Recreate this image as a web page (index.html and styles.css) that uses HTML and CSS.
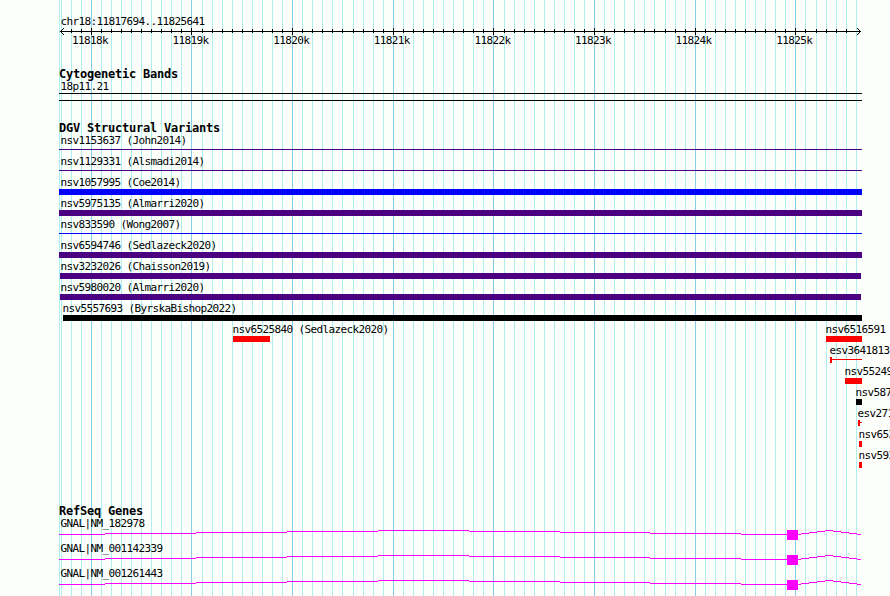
FILE: index.html
```
<!DOCTYPE html>
<html lang="en">
<head>
<meta charset="utf-8">
<title>chr18:11817694..11825641</title>
<link rel="stylesheet" href="styles.css">
</head>
<body>
<main class="browser">
  <svg class="grid" id="grid" width="890" height="596" shape-rendering="crispEdges" aria-hidden="true"></svg>

  <section class="ruler">
    <p class="label">chr18:11817694..11825641</p>
    <svg class="axis" id="axis" width="802" height="7" shape-rendering="crispEdges"></svg>
    <div class="scale">
      <span>11818k</span><span>11819k</span><span>11820k</span><span>11821k</span><span>11822k</span><span>11823k</span><span>11824k</span><span>11825k</span>
    </div>
  </section>

  <section class="bands">
    <h2>Cytogenetic Bands</h2>
    <p class="label">18p11.21</p>
    <div class="band"></div>
  </section>

  <section class="variants">
    <h2>DGV Structural Variants</h2>
    <div id="variants"></div>
  </section>

  <section class="genes">
    <h2>RefSeq Genes</h2>
    <div id="genes"></div>
  </section>
</main>
<script src="tracks.js"></script>
</body>
</html>
```
FILE: styles.css
```
* { box-sizing: border-box; }
body { margin: 0; background: #fdfffc; }
.browser {
  position: relative;
  width: 890px;
  height: 596px;
  padding: 15px 0 0 59px;
  overflow: hidden;
  display: flex;
  flex-direction: column;
  color: #000;
  font-family: "DejaVu Sans Mono", monospace;
}
.grid { position: absolute; left: 0; top: 0; z-index: -1; }
.label, .scale, h2 { margin: 0; white-space: nowrap; }
.label, .scale { font-size: 11px; line-height: 13px; letter-spacing: -0.622px; }
.label { padding-left: 1.4px; height: 13px; }
h2 { font-size: 12px; line-height: 13px; height: 12px; font-weight: bold; letter-spacing: -0.224px; }
svg { display: block; flex: none; }
section { flex: none; }

.ruler { height: 53px; }
.scale { display: flex; padding-left: 13px; margin-top: -1px; }
.scale span { width: 100.6px; flex: none; }

.bands { height: 54px; }
.band { width: 803px; height: 8px; border: solid #000; border-width: 1px 0; }

.variants { height: 383px; }
.variant { height: 21px; }
.bar { height: 6px; background: currentColor; }
.bar.thin { height: 1px; margin-top: 2px; }
.bar.flag { background: linear-gradient(currentColor, currentColor) 0 2px / 100% 1px no-repeat, linear-gradient(currentColor, currentColor) 0 0 / 2px 6px no-repeat; }
.variant .label { color: #000; }
.blue { color: #0000ff; }
.indigo { color: #4b0082; }
.black { color: #000; }
.red { color: #ff0000; }

.gene { height: 25px; }
.transcript { margin-top: -7px; }
```
FILE: tracks.js
```
const SVG = "http://www.w3.org/2000/svg";
const LEFT = 59;
const ORIGIN = 91.297;
const STEP = 10.066;

function rect(svg, x, y, width, height, fill) {
  const r = document.createElementNS(SVG, "rect");
  Object.entries({ x, y, width, height, fill }).forEach(([k, v]) => r.setAttribute(k, v));
  svg.appendChild(r);
}

// Guide lines every 100 bases, darker every 1000, with ticks on the ruler
const grid = document.getElementById("grid");
const axis = document.getElementById("axis");
rect(grid, LEFT, 0, 1, 596, "#afeeee");
rect(axis, 1, 3, 801, 1, "#000");
for (let n = -3; n <= 76; n++) {
  const x = Math.floor(ORIGIN + STEP * n);
  const major = n % 10 === 0;
  rect(grid, x, 0, 1, 596, major ? "#87ceeb" : "#afeeee");
  if (n > -3 && n < 76) {
    rect(axis, x - LEFT, major ? 0 : 1, 1, major ? 7 : 4, "#000");
  }
}
[1, 2, 3].forEach(d => {
  [3 - d, 3 + d].forEach(y => {
    rect(axis, 1 + d, y, 1, 1, "#000");
    rect(axis, 801 - d, y, 1, 1, "#000");
  });
});

// name, label x, bar start, bar end, colour, shape
const variants = [
  ["nsv1153637 (John2014)", 60, 59, 862, "indigo", "thin"],
  ["nsv1129331 (Alsmadi2014)", 60, 59, 862, "indigo", "thin"],
  ["nsv1057995 (Coe2014)", 60, 59, 862, "blue", ""],
  ["nsv5975135 (Almarri2020)", 60, 59, 862, "indigo", ""],
  ["nsv833590 (Wong2007)", 60, 59, 862, "blue", "thin"],
  ["nsv6594746 (Sedlazeck2020)", 60, 59, 862, "indigo", ""],
  ["nsv3232026 (Chaisson2019)", 60, 60, 861, "indigo", ""],
  ["nsv5980020 (Almarri2020)", 60, 60, 861, "indigo", ""],
  ["nsv5557693 (ByrskaBishop2022)", 62, 63, 862, "black", ""],
  [["nsv6525840 (Sedlazeck2020)", 232, 233, 270, "red", ""],
   ["nsv6516591", 825, 826, 862, "red", ""]],
  ["esv3641813", 829, 830, 862, "red", "flag"],
  ["nsv55249", 844, 845, 862, "red", ""],
  ["nsv587", 855, 856, 862, "black", ""],
  ["esv271", 857, 858, 862, "red", "flag"],
  ["nsv653", 858, 859, 862, "red", ""],
  ["nsv593", 858, 859, 862, "red", ""]
];

function feature([name, labelX, start, end, colour, shape], from) {
  return `<div class="${colour}"><p class="label" style="margin-left:${labelX - 1 - from}px">${name}</p>` +
    `<div class="bar ${shape}" style="margin-left:${start - from}px;width:${end - start}px"></div></div>`;
}

document.getElementById("variants").innerHTML = variants.map(v => {
  if (!Array.isArray(v[0])) return `<div class="variant">${feature(v, LEFT)}</div>`;
  return `<div class="variant" style="display:grid;grid-template-columns:${700 - LEFT}px 1fr">` +
    `${feature(v[0], LEFT)}${feature(v[1], 700)}</div>`;
}).join("");

// Introns rise and fall in one-pixel steps: start, end, height above baseline
const steps = [
  [59, 105, 0], [105, 196, 1], [196, 287, 2], [287, 378, 3], [378, 469, 4],
  [469, 560, 3], [560, 650, 2], [650, 741, 1], [741, 787, 0],
  [798, 801, 0], [801, 809, 1], [809, 817, 2], [817, 825, 3], [825, 833, 4],
  [833, 841, 3], [841, 849, 2], [849, 857, 1], [857, 861, 0]
];
["GNAL|NM_182978", "GNAL|NM_001142339", "GNAL|NM_001261443"].forEach(name => {
  const gene = document.createElement("div");
  gene.className = "gene";
  gene.innerHTML = `<p class="label">${name}</p>`;
  const svg = document.createElementNS(SVG, "svg");
  svg.setAttribute("class", "transcript");
  svg.setAttribute("width", 803);
  svg.setAttribute("height", 18);
  svg.setAttribute("shape-rendering", "crispEdges");
  steps.forEach(([a, b, h]) => rect(svg, a - LEFT, 11 - h, b - a, 1, "#ff00ff"));
  rect(svg, 787 - LEFT, 7, 11, 10, "#ff00ff");
  gene.appendChild(svg);
  document.getElementById("genes").appendChild(gene);
});
```
